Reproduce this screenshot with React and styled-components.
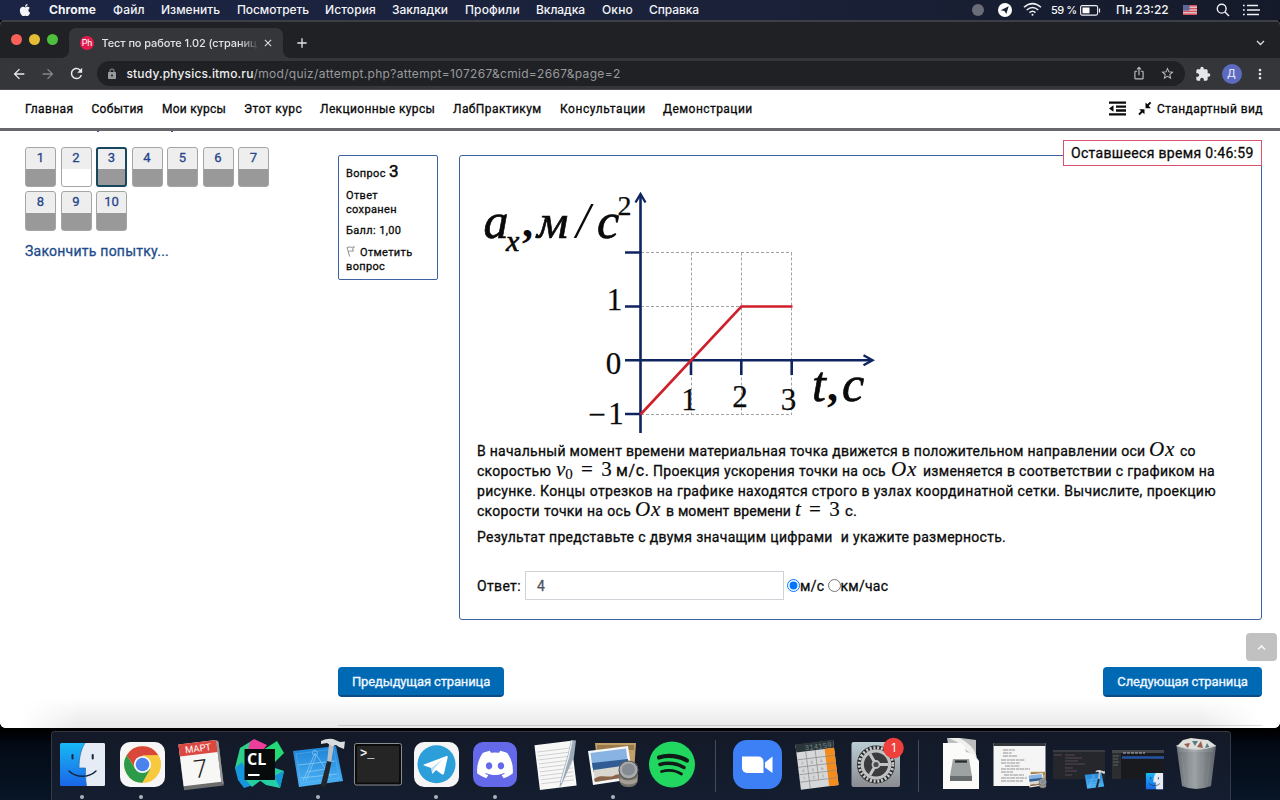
import React from 'react';
import styled, { createGlobalStyle } from 'styled-components';
import { FaApple, FaDiscord } from 'react-icons/fa';
import { MdArrowBack, MdArrowForward, MdRefresh, MdLock, MdIosShare, MdStarBorder, MdExtension, MdMoreVert, MdClose, MdAdd } from 'react-icons/md';

const Global = createGlobalStyle`
  * { box-sizing: border-box; }
  body { margin: 0; background: #03070f; overflow: hidden; }
  svg { display: block; flex: none; }
`;

const Desktop = styled.div`
  width: 1280px;
  height: 800px;
  display: flex;
  flex-direction: column;
  align-items: center;
  overflow: hidden;
  background: linear-gradient(180deg, #000 0, #000 731px, #030a15 745px, #071526 800px);
`;

/* ---------- system menu bar ---------- */
const MenuBar = styled.div`
  width: 100%;
  height: 20px;
  flex: none;
  display: flex;
  align-items: center;
  padding-left: 18px;
  background: linear-gradient(90deg, #1b2444, #1a2138 60%, #151a2a);
  color: #f4f5f8;
  font: 500 12px/20px Inter, "Liberation Sans", sans-serif;
`;
const MenuItem = styled.span`
  width: ${(p) => p.$w}px;
  flex: none;
  white-space: nowrap;
  font-weight: ${(p) => (p.$bold ? 700 : 500)};
  font-size: ${(p) => p.$size || 12}px;
  letter-spacing: ${(p) => p.$ls || 0}px;
`;
const StatusArea = styled.div`
  margin-left: auto;
  width: 308px;
  height: 20px;
  display: flex;
  align-items: center;
`;
const StatusDot = styled.span`
  width: 12px;
  height: 12px;
  border-radius: 50%;
  background: #6a6c78;
  margin-right: 14px;
`;
const TelegramBadge = styled.span`
  width: 14px;
  height: 14px;
  border-radius: 50%;
  background: #fff;
  margin-right: 11px;
`;

/* ---------- browser window ---------- */
const Window = styled.div`
  width: 1280px;
  height: 708px;
  flex: none;
  display: flex;
  flex-direction: column;
  border-radius: 5px 5px 6px 6px;
  overflow: hidden;
  background: #fff;
`;
const TabStrip = styled.div`
  height: 38px;
  flex: none;
  display: flex;
  align-items: flex-end;
  background: #202124;
  border-top: 2px solid #3d3e46;
  color: #e2e3e6;
`;
const Lights = styled.div`
  width: 69px;
  height: 37px;
  display: flex;
  align-items: center;
  gap: 7px;
  padding-left: 11px;
`;
const Light = styled.span`
  width: 11px;
  height: 11px;
  border-radius: 50%;
  background: ${(p) => p.$color};
`;
const Tab = styled.div`
  width: 214px;
  height: 30px;
  display: flex;
  align-items: center;
  padding: 0 9px 0 11px;
  background: #35363a;
  border-radius: 7px 7px 0 0;
  position: relative;
  &::before, &::after {
    content: '';
    position: absolute;
    bottom: 0;
    width: 7px;
    height: 7px;
  }
  &::before { left: -7px; background: radial-gradient(circle at 0 0, transparent 6.5px, #35363a 7px); }
  &::after { right: -7px; background: radial-gradient(circle at 100% 0, transparent 6.5px, #35363a 7px); }
`;
const Favicon = styled.span`
  width: 14px;
  height: 14px;
  border-radius: 50%;
  background: #e31b4d;
  color: #fff;
  font: 400 9px/14px Roboto, sans-serif;
  text-align: center;
  margin-right: 7.5px;
`;
const TabTitle = styled.span`
  width: 157px;
  white-space: nowrap;
  font: 500 11px/16px Inter, sans-serif;
  letter-spacing: -0.09px;
  margin-right: 3.5px;
  mask-image: linear-gradient(90deg, #000 138px, transparent 157px);
`;
const NewTab = styled.div`
  height: 30px;
  padding: 7px 0 0 11px;
`;
const TabMenu = styled.div`
  height: 30px;
  margin-left: auto;
  padding: 11px 15px 0 0;
`;
const Toolbar = styled.div`
  height: 32px;
  flex: none;
  display: flex;
  align-items: center;
  padding-left: 11px;
  background: #35363a;
  border-bottom: 1px solid #4a4b4f;
  color: #e4e6e9;
`;
const NavButton = styled.span`
  width: 28.5px;
  height: 28px;
  display: flex;
  align-items: center;
  color: ${(p) => (p.$dim ? '#85878b' : '#e8eaed')};
`;
const AddressBar = styled.div`
  width: 1088px;
  height: 25px;
  display: flex;
  align-items: center;
  padding: 0 10px 0 9px;
  border-radius: 13px;
  background: #202124;
  font: 500 12px/25px Inter, sans-serif;
  color: #969a9f;
  white-space: nowrap;
  margin-right: 10px;
`;
const Host = styled.span`
  color: #eceef0;
  letter-spacing: 0.16px;
  margin-left: 9px;
`;
const Path = styled.span`
  font-weight: 400;
  letter-spacing: 0.31px;
`;
const AddressActions = styled.span`
  display: flex;
  gap: 14px;
  margin-left: auto;
  color: #b9bcc0;
`;
const Avatar = styled.span`
  width: 20px;
  height: 20px;
  border-radius: 50%;
  background: #5c6bc0;
  color: #eef;
  font: 400 11px/20px Roboto, sans-serif;
  text-align: center;
  margin: 0 10px 0 11px;
`;

/* ---------- site ---------- */
const Site = styled.div`
  position: relative;
  flex: 1;
  display: flex;
  flex-direction: column;
  background: #fff;
  color: #0a0a0a;
  font: 400 14px/20px Roboto, "Open Sans", sans-serif;
  -webkit-text-stroke: 0.3px currentColor;
`;
const SiteHeader = styled.div`
  height: 41px;
  flex: none;
  display: flex;
  align-items: center;
  padding: 0 17px 1px 25px;
  border-bottom: 3px solid #68686c;
  font-size: 12px;
`;
const SiteLink = styled.span`
  width: ${(p) => p.$w}px;
  white-space: nowrap;
  letter-spacing: ${(p) => p.$ls}px;
`;
const ViewSwitch = styled.div`
  margin-left: auto;
  display: flex;
  align-items: center;
  letter-spacing: 0.4px;
  white-space: nowrap;
`;
const Columns = styled.div`
  flex: 1;
  display: flex;
  padding: 0 18px 0 25px;
`;
const Sidebar = styled.div`
  width: 313px;
`;
const ClippedHeading = styled.div`
  display: flex;
  gap: 72px;
  height: 16px;
  padding-left: 72px;
`;
const Descender = styled.i`
  width: 2px;
  height: 1px;
  background: #3b518f;
`;
const QuestionGrid = styled.div`
  display: flex;
  flex-wrap: wrap;
  gap: 4px 4.5px;
  width: 250px;
`;
const QuestionButton = styled.div`
  width: 31px;
  height: 40px;
  border: ${(p) => (p.$current ? '2px solid #16475f' : '1px solid #a5a5a5')};
  border-radius: 3px;
  padding-top: ${(p) => (p.$current ? 0 : 1)}px;
  background: linear-gradient(180deg, #eee 0, #eee ${(p) => (p.$current ? 20 : 21)}px, ${(p) => (p.$empty ? '#fff' : '#999')} ${(p) => (p.$current ? 20 : 21)}px);
  color: #27458c;
  font-size: 13px;
  line-height: 18px;
  text-align: center;
`;
const FinishLink = styled.div`
  margin-top: 10px;
  color: #1b4b8c;
  letter-spacing: 0.24px;
`;
const Main = styled.div`
  width: 924px;
  padding-top: 24px;
`;
const QuestionRow = styled.div`
  display: flex;
  justify-content: space-between;
  align-items: flex-start;
`;
const Info = styled.div`
  width: 99.5px;
  height: 125px;
  border: 1px solid #3d62a3;
  border-radius: 2px;
  padding: 5px 7px 0;
  font-size: 11px;
  line-height: 13.5px;
  letter-spacing: 0.35px;
  white-space: nowrap;
`;
const InfoLine = styled.div`
  margin-bottom: ${(p) => p.$mb}px;
  line-height: ${(p) => p.$lh || 13.5}px;
`;
const Big = styled.span`
  font-size: 17px;
  -webkit-text-stroke: 0.5px currentColor;
`;
const InlineIcon = styled.span`
  display: inline-block;
  width: 14px;
  vertical-align: -1px;
`;
const Question = styled.div`
  width: 803.5px;
  height: 465px;
  border: 1px solid #3d62a3;
  border-radius: 3px;
  padding: 24px 0 0 17.5px;
  position: relative;
`;
const Timer = styled.div`
  position: absolute;
  right: -1px;
  top: -16px;
  width: 199px;
  height: 26px;
  padding-left: 7px;
  border: 1px solid #d9516f;
  background: #fff;
  line-height: 24px;
  letter-spacing: 0.33px;
  white-space: nowrap;
`;
const Paragraph = styled.div`
  margin-top: 6px;
`;
const Line = styled.div`
  height: 20px;
  display: flex;
  align-items: baseline;
  white-space: nowrap;
`;
const Words = styled.span`
  width: ${(p) => p.$w}px;
  margin-right: ${(p) => p.$gap || 0}px;
  text-align-last: justify;
  font-size: ${(p) => p.$size || 14}px;
  line-height: ${(p) => (p.$size > 14 ? 17 : 20)}px;
  letter-spacing: ${(p) => p.$ls ?? 0.27}px;
`;
const Formula = styled.span`
  width: ${(p) => p.$w}px;
  font: 400 21px/14px "Liberation Serif", serif;
  -webkit-text-stroke: 0.15px #0a0a0a;
  letter-spacing: ${(p) => p.$ls || 0}px;
  word-spacing: ${(p) => p.$ws || 0}px;
  & sub { font-size: 15px; line-height: 0; vertical-align: -3px; }
`;
const AnswerRow = styled.div`
  margin-top: 24px;
  display: flex;
  align-items: center;
  height: 29px;
  white-space: nowrap;
`;
const AnswerLabel = styled.span`
  width: 48px;
  letter-spacing: 0.35px;
`;
const AnswerField = styled.input`
  width: 259px;
  height: 29px;
  border: 1px solid #cfd2d6;
  padding: 0 11px;
  font: 400 14px Roboto, sans-serif;
  color: #4f555c;
  margin-right: 3px;
`;
const Radio = styled.input`
  width: 13px;
  height: 13px;
  margin: 0;
`;
const Unit = styled.span`
  width: ${(p) => p.$w}px;
  letter-spacing: 0.25px;
`;
const Pager = styled.div`
  display: flex;
  justify-content: space-between;
  margin-top: 47px;
`;
const PageButton = styled.div`
  height: 30px;
  width: ${(p) => p.$w}px;
  border-radius: 4px;
  background: #0069b4;
  border-bottom: 2px solid #0b4c83;
  color: #f1f8ff;
  font-size: 13px;
  line-height: 29px;
  letter-spacing: -0.14px;
  text-align: center;
`;
const Divider = styled.div`
  height: 1px;
  margin-top: 28px;
  background: #dedede;
`;
const ToTop = styled.div`
  position: absolute;
  right: 3px;
  bottom: 67px;
  width: 31px;
  height: 28px;
  border-radius: 4px;
  background: #c1c1c1;
  display: flex;
  align-items: center;
  justify-content: center;
`;
const DockShade = styled.div`
  position: absolute;
  left: 20px;
  right: 20px;
  bottom: 0;
  height: 30px;
  background: linear-gradient(180deg, transparent, rgba(0, 0, 0, 0.09));
  mask-image: linear-gradient(90deg, transparent, #000 60px, #000 calc(100% - 60px), transparent);
`;

/* ---------- dock ---------- */
const DockBar = styled.div`
  width: 1180px;
  height: 69px;
  margin: 3px 0 0 1px;
  flex: none;
  display: flex;
  padding-left: 1px;
  border: 1px solid #353944;
  border-bottom: 0;
  border-radius: 4px 4px 0 0;
  background: linear-gradient(180deg, #131927, #141e30);
`;
const DockItem = styled.div`
  width: 59px;
  height: 68px;
  flex: none;
  display: flex;
  flex-direction: column;
  align-items: center;
`;
const RunningDot = styled.span`
  width: 4px;
  height: 4px;
  margin-top: 4px;
  border-radius: 50%;
  background: #aeb1ba;
`;
const DockSeparator = styled.div`
  width: 1px;
  height: 52px;
  margin: 8px 12px 0 13px;
  flex: none;
  background: #454b58;
`;

function Plot() {
  return (
    <svg width="410" height="255" viewBox="477 180 410 255">
      <g stroke="#a2a2a2" strokeWidth="1" strokeDasharray="3 2" fill="none">
        <path d="M641 252.5H792M641 306.5H792M641 414.5H792M691.500 252.5V414M741.5 252.5V414M791.5 252.5V414" />
      </g>
      <g stroke="#0f2560" strokeWidth="2.6" fill="none">
        <path d="M640.5 433V195M625 360.3H871M625 252.5H640M625 306.5H640M625 414H640M691 360V375M741.3 360V375M791.7 360V375" />
        <path d="M635.5 202.5L640.5 194L645.5 202.5" strokeWidth="2.4" />
        <path d="M863.5 355.3L872.5 360.3L863.5 365.3" strokeWidth="2.4" />
      </g>
      <path d="M640.5 414.5L741.3 306.5H792.5" stroke="#cf1f2b" strokeWidth="2.6" fill="none" />
      <g fontFamily="Liberation Serif, serif" fill="#0a0a0a">
        <g fontSize="50" fontStyle="italic" stroke="#0a0a0a" strokeWidth=".7">
          <text x="483.5" y="237.5">a</text>
          <text x="537" y="237.5" fontSize="49">м</text>
          <text x="597" y="237.5">с</text>
          <text x="812" y="401">t</text>
          <text x="842" y="401">с</text>
          <text x="506" y="250.5" fontSize="30">x</text>
        </g>
        <text x="576" y="237" fontSize="50" fontStyle="italic" stroke="none">/</text>
        <g fontSize="44" fontWeight="700" stroke="none">
          <text x="522" y="237">,</text>
          <text x="827" y="401">,</text>
        </g>
        <g stroke="#0a0a0a" strokeWidth=".25">
          <text x="617.5" y="215" fontSize="28">2</text>
          <g fontSize="31" textAnchor="middle">
            <text x="614.500" y="309.5">1</text>
            <text x="613.5" y="373.5">0</text>
            <text x="597" y="425">−</text>
            <text x="616" y="423.5">1</text>
            <text x="689" y="409.5">1</text>
            <text x="740" y="406.5">2</text>
            <text x="788.5" y="410">3</text>
          </g>
        </g>
      </g>
    </svg>
  );
}

const Icon = ({ children }) => (
  <svg width="59" height="59" viewBox="0 0 59 59">{children}</svg>
);

const FinderFace = () => (
  <g>
    <defs>
      <linearGradient id="fa" x2="0" y2="1"><stop stopColor="#17b9f5" /><stop offset="1" stopColor="#1a66e8" /></linearGradient>
    </defs>
    <rect x="7" y="11" width="45" height="43" rx="1.5" fill="url(#fa)" />
    <path d="M32 11H50.500a1.500 1.500 0 0 1 1.500 1.500V52.500a1.500 1.500 0 0 1 -1.500 1.500H33.500C32.500 48 32.500 42 32.500 36H26C26 26 28 17 32 11Z" fill="#e6ecf5" />
    <path d="M19.500 23v3.500M39.700 23v3.500" stroke="#14263e" strokeWidth="2" strokeLinecap="round" />
    <path d="M16 39c7 7 20 7 27 0" stroke="#14263e" strokeWidth="1.500" fill="none" strokeLinecap="round" />
    <path d="M32 11C28 17 26 26 26 36H32.500C32.500 42 32.500 48 33.500 54" stroke="#2b68a8" strokeWidth=".7" fill="none" />
  </g>
);
const XcodeTools = () => (
  <g>
    <defs><linearGradient id="xa" x2="0" y2="1"><stop stopColor="#1f83d6" /><stop offset="1" stopColor="#4db3f6" /></linearGradient></defs>
    <path d="M4 19L47 14L54 49L10 55Z" fill="url(#xa)" />
    <g stroke="#a6dcfb" strokeWidth=".8" fill="none" opacity=".7">
      <path d="M7 22L45 17L50 46L12 51Z" opacity=".4" />
      <path d="M14 49L26 21L42 45M17 49L27 24M18 40L37 37M9 33L46 29M12 46L48 42" />
      <circle cx="26" cy="21" r="2.500" />
    </g>
    <path d="M40 12L45 13L42 31L38 31Z" fill="#b9bec4" />
    <path d="M38 29L42.500 30L37 55L31.500 54Z" fill="#23272c" />
    <path d="M32 9Q38 6 44 7L51 10L56 9.500L55 17L50 15L47 13L43 14L38 11L32 12Z" fill="#d9dcdf" />
  </g>
);
const PreviewPhotos = () => (
  <g>
    <path d="M11 11L52 11L50 40L14 38Z" fill="#c2a169" />
    <path d="M13 13h37v5H13z" fill="#7d6239" opacity=".6" />
    <path d="M4 19L44 14L49 47L9 53Z" fill="#f7f7f7" />
    <path d="M6.500 21L42 16.500L44 32L8.500 36Z" fill="#88b3e2" />
    <path d="M8 31L44 27L44.500 35L9.500 40Z" fill="#315d94" />
    <path d="M9.500 38L45 33L46.500 44.500L11 50Z" fill="#d9d6d0" />
    <path d="M10 47C17 41 27 47 31 43L46 40L46.500 44.500L11 50Z" fill="#8a6449" />
    <rect x="35" y="29" width="19" height="26" rx="8" fill="#77736d" />
    <ellipse cx="44.500" cy="38" rx="9.500" ry="9" fill="#a9abad" stroke="#5b5a58" strokeWidth="1.200" />
    <ellipse cx="44.500" cy="37.500" rx="6.500" ry="6" fill="#858b93" />
    <path d="M36 46q8 5 17 0v4q-8 5-17 0z" fill="#a39d93" />
  </g>
);

const Chrome = () => (
  <Icon>
    <rect x="8" y="10" width="45" height="45" rx="10" fill="#f6f6f6" />
    <g transform="translate(30.500 32.500)">
      <circle r="18.300" fill="#f7c93e" />
      <path d="M-15.850 -9.150A18.300 18.300 0 0 1 15.850 -9.150L0 -8.500L-7.500 3Z" fill="#d8473a" />
      <path d="M-15.850 -9.150A18.300 18.300 0 0 0 0 18.300L7.800 4.500L-7 4.500Z" fill="#2b9a4b" />
      <path d="M0 -9.150H15.850A18.300 18.300 0 0 1 0 18.300L7.900 4.600Z" fill="#f7c93e" />
      <circle r="8.600" fill="#f6f6f6" />
      <circle r="6.800" fill="#4a82ee" />
    </g>
  </Icon>
);
const Calendar = () => (
  <Icon>
    <g transform="rotate(-7 30 32)">
      <rect x="10" y="11" width="40" height="45" fill="#6c6d6c" />
      <rect x="10" y="10" width="38" height="42" fill="#f7f7f5" />
      <rect x="10" y="10" width="38" height="12" fill="#dc4841" />
      <path d="M48 10l2 2v43l-2-3z" fill="#989897" />
      <text x="29" y="19.500" fontSize="9.500" fill="#fff" textAnchor="middle" fontFamily="Roboto">МАРТ</text>
      <text x="29" y="45.500" fontSize="25" fill="#222" textAnchor="middle" fontFamily="Roboto" fontWeight="300">7</text>
    </g>
  </Icon>
);
const CLion = () => (
  <Icon>
    <path d="M10 16L23 8L20 30L8 44L5 36Z" fill="#2cd08b" />
    <path d="M20 10L24 7L37 13L30 22H17Z" fill="#ec3e9b" />
    <path d="M33 18L47 9L54 21L43 32Z" fill="#22d976" />
    <path d="M5 36L12 30L23 53L14 56L8 48Z" fill="#1697dd" />
    <path d="M16 48L34 46L22 55Z" fill="#26cf9d" />
    <path d="M42 35L54 39L50 56L36 53L28 47Z" fill="#25cfa4" />
    <path d="M44 44L54 39L50 56Z" fill="#1494d7" />
    <rect x="14.500" y="17" width="30.500" height="31" fill="#080b0b" />
    <text x="17" y="33" fontFamily="Open Sans" fontWeight="700" fontSize="16" fill="#fff">CL</text>
    <path d="M18 43h11.500" stroke="#fff" strokeWidth="2" />
  </Icon>
);
const Terminal = () => (
  <Icon>
    <rect x="6.500" y="11.500" width="47" height="41.500" rx="2" fill="#0b0b0b" stroke="#8b8e90" />
    <rect x="9" y="14" width="42" height="36.500" fill="#252525" />
    <text x="12" y="25" fontFamily="Liberation Mono" fontWeight="700" fontSize="12" fill="#f1f1f1">&gt;_</text>
  </Icon>
);
const Telegram = () => (
  <Icon>
    <rect x="7" y="10" width="45" height="45" rx="10" fill="#f5f5f5" />
    <circle cx="29.500" cy="32.300" r="19" fill="#2c9fdb" />
    <path d="M17 32.500L39.500 24q1.500-.4 1.200 1.200L37 41.500q-.6 1.800-2.200.7L29 38l-3 3.300q-.8.6-1-.4l-.7-5L17 33.600q-1-.6 0-1.100z" fill="#fff" />
    <path d="M24.300 36l11-8.500-8.300 9.500-1.500 4z" fill="#bcdcf0" />
  </Icon>
);
const Discord = () => (
  <Icon>
    <rect x="7" y="10" width="44" height="45" rx="10" fill="#6369e8" />
    <FaDiscord x="9.500" y="13" size={39} color="#fff" />
  </Icon>
);
const TextEdit = () => (
  <Icon>
    <g transform="rotate(-7 30 33)">
      <rect x="12" y="11" width="37" height="45" fill="#f7f7f6" />
      <path d="M14 18h33M14 22h33M14 26h33M14 30h33M14 34h33M14 38h33M14 42h33M14 46h33M14 50h33" stroke="#c6c8ca" strokeWidth=".8" />
    </g>
    <path d="M46 8L51 8.500L49 25L37 52L34.500 56L35 50L43 22Z" fill="#9caab6" />
    <path d="M47 9L43.500 25L36 51" stroke="#edf2f5" strokeWidth="1.200" fill="none" />
  </Icon>
);
const Spotify = () => (
  <Icon>
    <circle cx="29" cy="32.500" r="23" fill="#22d760" />
    <g fill="none" stroke="#101a18" strokeLinecap="round">
      <path d="M16 25.500C25 22.500 37 24 44 28.500" strokeWidth="4.200" />
      <path d="M17 32.500C25 30 34.500 31.500 41 35.500" strokeWidth="3.500" />
      <path d="M18.500 39.500C25 37.500 33 38.500 38.500 42" strokeWidth="2.800" />
    </g>
  </Icon>
);
const Zoom = () => (
  <Icon>
    <rect x="5" y="8" width="49" height="49" rx="14" fill="#3d80f6" />
    <path d="M14 24.500H30.500a5 5 0 0 1 5 5V41H19a5 5 0 0 1-5-5Z" fill="#fff" />
    <path d="M37 30.500L44.500 24.500V41L37 35.500Z" fill="#fff" />
  </Icon>
);
const Calculator = () => (
  <Icon>
    <g transform="rotate(-7 30 33)">
      <rect x="11" y="10.500" width="38" height="45" fill="#d6d7d9" />
      <rect x="11" y="10" width="38" height="8" fill="#2b3439" />
      <rect x="39.500" y="18" width="9.500" height="37.500" fill="#f38c1c" />
      <path d="M20.500 18v37.500M30 18v30M11 25.500h38M11 33h38M11 40.500h38M11 48h38" stroke="#8d8b88" strokeWidth=".7" />
      <text x="47" y="17" fontSize="7.500" textAnchor="end" fill="#6d8587" fontFamily="Liberation Mono">314159</text>
      <g fontSize="4" fill="#888" fontFamily="Roboto">
        <text x="14.500" y="31">7</text><text x="24" y="31">8</text><text x="33.500" y="31">9</text>
        <text x="14.500" y="38.500">4</text><text x="24" y="38.500">5</text><text x="33.500" y="38.500">6</text>
        <text x="14.500" y="46">1</text><text x="24" y="46">2</text><text x="33.500" y="46">3</text>
      </g>
    </g>
  </Icon>
);
const Settings = () => (
  <Icon>
    <defs><linearGradient id="sa" x2="0" y2="1"><stop stopColor="#b9cdd3" /><stop offset="1" stopColor="#8b8c91" /></linearGradient></defs>
    <rect x="5.500" y="10" width="48.500" height="45" rx="2" fill="url(#sa)" />
    <circle cx="30" cy="32.500" r="19" fill="#28292b" />
    <circle cx="30" cy="32.500" r="16.800" fill="none" stroke="#c9cbcc" strokeWidth="3" strokeDasharray="2.100 1.700" />
    <circle cx="30" cy="32.500" r="13.700" fill="#3b3c3e" stroke="#bfc1c2" strokeWidth="3.200" />
    <path d="M30 32.500L42 32.500M30 32.500L24 22M30 32.500L24 43" stroke="#c3c5c6" strokeWidth="3" />
    <circle cx="30" cy="32.500" r="3.500" fill="#4b4c4e" stroke="#c3c5c6" strokeWidth="1.800" />
    <circle cx="47.500" cy="16" r="10.300" fill="#f0403c" />
    <text x="47.500" y="20" fontSize="11.500" textAnchor="middle" fill="#fff" fontFamily="Inter">1</text>
  </Icon>
);
const Drive = () => (
  <Icon>
    <path d="M16 6H30L45 8V30H20Z" fill="#bcbdbc" />
    <path d="M18 6H28Q42 12 46 25L40 22L26 10Z" fill="#f0f0ef" />
    <path d="M12 11H29Q34 12 35 20Q44 21 48 29V57H12Z" fill="#fbfbfa" />
    <path d="M22 27H38L41 44V49H19V44Z" fill="#9da2a2" />
    <path d="M19 44H41V49H19Z" fill="#686d6d" />
    <path d="M24 29.500h12" stroke="#262b2c" strokeWidth="2.300" />
  </Icon>
);
const DocumentWindow = () => (
  <Icon>
    <rect x="3.500" y="11" width="52" height="43" fill="#f5f5f5" />
    <path d="M3.500 12.500h52" stroke="#33363b" strokeWidth="3" />
    <path d="M13 18h12M13 21h9M13 24h14M11 28h24M11 31h19M15 34h15M11 37h29M11 40h12M14 43h20M11 46h26M11 49h22" stroke="#929292" strokeWidth="1" strokeDasharray="5 .7 3 .5" />
    <svg x="37" y="38" width="20" height="20" viewBox="2 8 54 50"><PreviewPhotos /></svg>
  </Icon>
);
const EditorWindow = () => (
  <Icon>
    <rect x="4" y="18" width="52" height="29" fill="#26272d" />
    <path d="M4 19h52" stroke="#3a3b43" strokeWidth="2" />
    <path d="M5 23h8M16 23h10M16 26h17M16 29h13M16 32h20M16 36h8M16 39h12M16 43h7" stroke="#665263" strokeWidth=".8" />
    <svg x="35" y="37" width="21" height="21" viewBox="2 5 54 52"><XcodeTools /></svg>
  </Icon>
);
const FinderWindow = () => (
  <Icon>
    <rect x="4" y="18" width="52" height="29" fill="#191a1d" />
    <rect x="4" y="18" width="9" height="29" fill="#2c2d31" />
    <path d="M4 19.500h52" stroke="#45474d" strokeWidth="3" />
    <path d="M15 21h22" stroke="#bbb" strokeWidth="1" strokeDasharray="3 1" />
    <path d="M14 25.500h42" stroke="#2455a5" strokeWidth="2.500" />
    <path d="M5 24h6M5 27h5M5 30h6M5 33h5" stroke="#6d6e75" strokeWidth=".8" />
    <svg x="37.500" y="41" width="18" height="16.500" viewBox="7 11 45 43"><FinderFace /></svg>
  </Icon>
);
const Trash = () => (
  <Icon>
    <defs><linearGradient id="ta"><stop stopColor="#6f7578" /><stop offset=".45" stopColor="#a4aaac" /><stop offset="1" stopColor="#62686c" /></linearGradient></defs>
    <path d="M10 14L16 8L24 6L32 7L41 8L48 13L46 20H12Z" fill="#dfdfdc" />
    <path d="M17 12l4 4 2-5zM34 9l-4 6 6 1z" fill="#9a5f4d" />
    <path d="M25 9l3 5 3-5zM40 11l3 5-5 0z" fill="#577c86" />
    <path d="M9.500 14Q29 21 49 14L44 54Q29 60 15 54Z" fill="url(#ta)" opacity=".94" />
    <path d="M9.500 13.500Q29 21 49 13.500" stroke="#c7cbcc" strokeWidth="1.200" fill="none" />
    <path d="M15 23l3 28M22 23l1 30M29 23v31M36 23l-1 30M43 23l-3 28" stroke="#c4c8ca" strokeWidth=".6" opacity=".2" />
  </Icon>
);
const Finder = () => <Icon><FinderFace /></Icon>;
const Xcode = () => <Icon><XcodeTools /></Icon>;
const Preview = () => <Icon><PreviewPhotos /></Icon>;

const DOCK = [
  [Finder, true], [Chrome, true], [Calendar], [CLion], [Xcode, true], [Terminal], [Telegram, true],
  [Discord, true], [TextEdit], [Preview, true], [Spotify], null,
  [Zoom], [Calculator], [Settings], null, [Drive], [DocumentWindow], [EditorWindow], [FinderWindow], [Trash],
];

const MENU = [['Chrome', 64, 0.1, true], ['Файл', 48, 0.2], ['Изменить', 76, 0.03], ['Посмотреть', 88, -0.09], ['История', 67, 0.1], ['Закладки', 73, -0.05], ['Профили', 71, 0.15], ['Вкладка', 66, -0.08], ['Окно', 47, 0.15], ['Справка', 60, -0.09]];
const SITE_LINKS = [['Главная', 66.5, 0.42], ['События', 70.5, 0.3], ['Мои курсы', 82, 0.25], ['Этот курс', 76, 0.43], ['Лекционные курсы', 133, 0.38], ['ЛабПрактикум', 107, 0.4], ['Консультации', 103, 0.54], ['Демонстрации', 92, 0.44]];

export default function App() {
  return (
    <Desktop>
      <Global />
      <MenuBar>
        <MenuItem $w={31}><FaApple size={14} /></MenuItem>
        {MENU.map(([t, w, ls, b]) => <MenuItem key={t} $w={w} $ls={ls} $bold={b}>{t}</MenuItem>)}
        <StatusArea>
          <StatusDot />
          <TelegramBadge>
            <svg width="14" height="14" viewBox="0 0 14 14"><path d="M2.700 7.300L10.700 3.200L8.300 11L6.500 8.100Z" fill="#1a2033" /></svg>
          </TelegramBadge>
          <MenuItem $w={28}>
            <svg width="19" height="20" viewBox="0 0 19 20" fill="none" stroke="#eceef4" strokeWidth="1.500">
              <path d="M1 7.200Q9.500 0 18 7.200M3.700 10Q9.500 5 15.300 10M6.500 12.600Q9.500 10 12.500 12.600" />
              <circle cx="9.500" cy="14.800" r="1" fill="#eceef4" stroke="none" />
            </svg>
          </MenuItem>
          <MenuItem $w={29} $ls={-0.5} $size={11}>59 %</MenuItem>
          <MenuItem $w={36}>
            <svg width="21" height="11" viewBox="0 0 21 11">
              <rect x=".6" y=".6" width="17" height="9.500" rx="1.500" fill="none" stroke="#eef0f5" strokeWidth="1.100" />
              <path d="M2.500 2.500h7v5.800h-7z" fill="#fff" /><path d="M19.500 3.500v4" stroke="#eef0f5" strokeWidth="1.200" />
            </svg>
          </MenuItem>
          <MenuItem $w={67}>Пн 23:22</MenuItem>
          <MenuItem $w={33}>
            <svg width="14" height="10" viewBox="0 0 14 10">
              <rect width="14" height="10" fill="#e3bcc3" /><path d="M0 .8h14M0 3.600h14M0 6.400h14M0 9.200h14" stroke="#d2525f" strokeWidth="1.400" /><rect width="6.500" height="5.500" fill="#5d6798" />
            </svg>
          </MenuItem>
          <MenuItem $w={27}>
            <svg width="14" height="14" viewBox="0 0 14 14" fill="none" stroke="#f0f1f5" strokeWidth="1.400"><circle cx="5.700" cy="5.700" r="4.400" /><path d="M9 9l4 4" /></svg>
          </MenuItem>
          <svg width="18" height="12" viewBox="0 0 18 12" stroke="#f0f1f5" strokeWidth="1.700"><path d="M0 1.500h1.700M0 6h1.700M0 10.500h1.700M4 1.500h11M4 6h13M4 10.500h12" /></svg>
        </StatusArea>
      </MenuBar>

      <Window>
        <TabStrip>
          <Lights><Light $color="#f9605a" /><Light $color="#e5bd35" /><Light $color="#4dbf3c" /></Lights>
          <Tab>
            <Favicon>Ph</Favicon>
            <TabTitle>Тест по работе 1.02 (страниц</TabTitle>
            <MdClose size={12} />
          </Tab>
          <NewTab><MdAdd size={16} /></NewTab>
          <TabMenu><svg width="9" height="8" viewBox="0 0 9 8"><path d="M1 2l3.500 3.500L8 2" fill="none" stroke="#d5d7da" strokeWidth="1.400" /></svg></TabMenu>
        </TabStrip>
        <Toolbar>
          <NavButton><MdArrowBack size={16} /></NavButton>
          <NavButton $dim><MdArrowForward size={16} /></NavButton>
          <NavButton><MdRefresh size={17} /></NavButton>
          <AddressBar>
            <MdLock size={12} />
            <Host>study.physics.itmo.ru</Host>
            <Path>/mod/quiz/attempt.php?attempt=107267&amp;cmid=2667&amp;page=2</Path>
            <AddressActions><MdIosShare size={14} /><MdStarBorder size={15} /></AddressActions>
          </AddressBar>
          <MdExtension size={16} />
          <Avatar>Д</Avatar>
          <MdMoreVert size={16} />
        </Toolbar>

        <Site>
          <SiteHeader>
            {SITE_LINKS.map(([t, w, ls]) => <SiteLink key={t} $w={w} $ls={ls}>{t}</SiteLink>)}
            <ViewSwitch>
              <svg width="29" height="15" viewBox="0 0 29 15">
                <path d="M0 1.600h17M7 5.700h10M7 9.500h10M0 13.400h17" stroke="#0b0b0b" strokeWidth="2.300" />
                <path d="M0 7.500L4.500 4.300V10.700Z" fill="#0b0b0b" />
              </svg>
              <svg width="19" height="15" viewBox="0 0 19 15">
                <path d="M7.500 7.300V1.500L9.300 3.300L12 .7L13.300 2L10.700 4.700L12.800 7.300ZM6.500 8.200H1.200L3 10L.3 12.900L1.700 14.200L4.500 11.500L6.500 13.300Z" fill="#0b0b0b" />
              </svg>
              Стандартный вид
            </ViewSwitch>
          </SiteHeader>

          <Columns>
            <Sidebar>
              <ClippedHeading><Descender /><Descender /></ClippedHeading>
              <QuestionGrid>
                {[1, 2, 3, 4, 5, 6, 7, 8, 9, 10].map((n) => (
                  <QuestionButton key={n} $current={n === 3} $empty={n === 2}>{n}</QuestionButton>
                ))}
              </QuestionGrid>
              <FinishLink>Закончить попытку...</FinishLink>
            </Sidebar>

            <Main>
              <QuestionRow>
                <Info>
                  <InfoLine $mb={5} $lh={20}>Вопрос <Big>3</Big></InfoLine>
                  <InfoLine $mb={7.5}>Ответ<br />сохранен</InfoLine>
                  <InfoLine $mb={9}>Балл: 1,00</InfoLine>
                  <InfoLine $mb={0}>
                    <InlineIcon>
                      <svg width="10" height="11" viewBox="0 0 10 11" fill="none" stroke="#8d8d8d" strokeWidth="1"><path d="M1 1.500L3.700 10.500M1 1.500C4 .3 5.500 2 8.500 .8L6.500 3L7.500 5C5 5.500 4.300 4.500 2.200 5.500" /></svg>
                    </InlineIcon>
                    Отметить<br />вопрос
                  </InfoLine>
                </Info>

                <Question>
                  <Timer>Оставшееся время 0:46:59</Timer>
                  <Plot />
                  <Paragraph>
                    <Line>
                      <Words $w={668} $gap={4}>В начальный момент времени материальная точка движется в положительном направлении оси</Words>
                      <Formula $w={31} $ls={0.8}><i>Ox</i></Formula>
                      <Words $w={17}>со</Words>
                    </Line>
                    <Line>
                      <Words $w={74} $gap={5}>скоростью</Words>
                      <Formula $w={60} $ws={3}><i>v</i><sub>0</sub> = 3</Formula>
                      <Words $w={33} $gap={4} $size={16} $ls={0.6}>м/с.</Words>
                      <Words $w={233} $gap={5}>Проекция ускорения точки на ось</Words>
                      <Formula $w={32} $ls={0.8}><i>Ox</i></Formula>
                      <Words $w={292}>изменяется в соответствии с графиком на</Words>
                    </Line>
                    <Line><Words $w={739} $ls={0.33}>рисунке. Концы отрезков на графике находятся строго в узлах координатной сетки. Вычислите, проекцию</Words></Line>
                    <Line>
                      <Words $w={154} $gap={4}>скорости точки на ось</Words>
                      <Formula $w={31} $ls={0.8}><i>Ox</i></Formula>
                      <Words $w={125} $gap={4} $ls={0.08}>в момент времени</Words>
                      <Formula $w={50} $ws={3}><i>t</i> = 3</Formula>
                      <Words $w={14} $size={15}>с.</Words>
                    </Line>
                  </Paragraph>
                  <Paragraph>
                    <Line><Words $w={529}>Результат представьте с двумя значащим цифрами&nbsp; и укажите размерность.</Words></Line>
                  </Paragraph>
                  <AnswerRow>
                    <AnswerLabel>Ответ:</AnswerLabel>
                    <AnswerField defaultValue="4" />
                    <Radio type="radio" name="unit" defaultChecked />
                    <Unit $w={27.5}>м/с</Unit>
                    <Radio type="radio" name="unit" />
                    <Unit $w={50}>км/час</Unit>
                  </AnswerRow>
                </Question>
              </QuestionRow>
              <Pager>
                <PageButton $w={166}>Предыдущая страница</PageButton>
                <PageButton $w={159}>Следующая страница</PageButton>
              </Pager>
              <Divider />
            </Main>
          </Columns>
          <DockShade />
          <ToTop><svg width="9" height="7" viewBox="0 0 9 7"><path d="M1 5.500L4.500 2L8 5.500" fill="none" stroke="#f5f5f5" strokeWidth="1.600" /></svg></ToTop>
        </Site>
      </Window>

      <DockBar>
        {DOCK.map((entry, i) => {
          if (!entry) return <DockSeparator key={i} />;
          const [Art, running] = entry;
          return <DockItem key={i}><Art />{running && <RunningDot />}</DockItem>;
        })}
      </DockBar>
    </Desktop>
  );
}
